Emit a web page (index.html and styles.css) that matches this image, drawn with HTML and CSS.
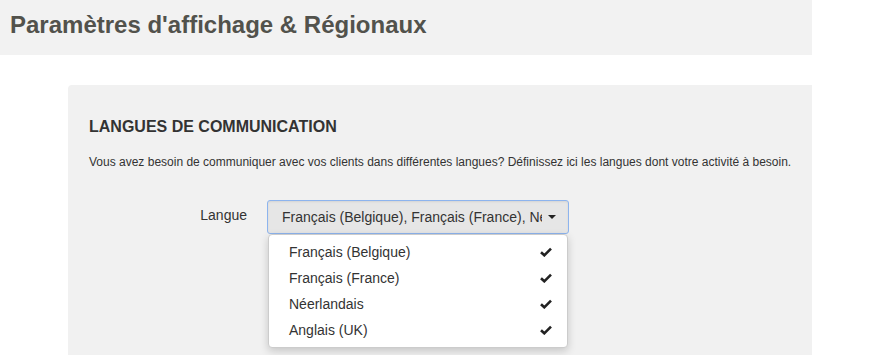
FILE: index.html
```html
<!DOCTYPE html>
<html lang="fr">
<head>
    <meta charset="UTF-8">
    <meta name="viewport" content="width=device-width, initial-scale=1.0">
    <title>Paramètres d'affichage & Régionaux</title>
    <link rel="stylesheet" href="styles.css">
</head>
<body>
    <header class="page-head">
        <h1>Paramètres d'affichage &amp; Régionaux</h1>
    </header>

    <div class="content">
        <section class="card">
            <h2>LANGUES DE COMMUNICATION</h2>
            <p class="intro">Vous avez besoin de communiquer avec vos clients dans différentes langues? Définissez ici les langues dont votre activité à besoin.</p>

            <!-- Language multiselect -->
            <div class="form-row">
                <label class="form-label" for="lang-select">Langue</label>
                <div class="multiselect">
                    <button id="lang-select" class="multiselect-toggle" type="button">
                        <span class="multiselect-text">Français (Belgique), Français (France), Néerlandais, Anglais (UK)</span>
                        <span class="caret"></span>
                    </button>
                    <ul class="multiselect-menu">
                        <li><span>Français (Belgique)</span><svg class="check" viewBox="0 0 12 10"><path d="M1 5.2 L4.3 8.3 L11 1.6" /></svg></li>
                        <li><span>Français (France)</span><svg class="check" viewBox="0 0 12 10"><path d="M1 5.2 L4.3 8.3 L11 1.6" /></svg></li>
                        <li><span>Néerlandais</span><svg class="check" viewBox="0 0 12 10"><path d="M1 5.2 L4.3 8.3 L11 1.6" /></svg></li>
                        <li><span>Anglais (UK)</span><svg class="check" viewBox="0 0 12 10"><path d="M1 5.2 L4.3 8.3 L11 1.6" /></svg></li>
                    </ul>
                </div>
            </div>
        </section>
    </div>
</body>
</html>
```

FILE: styles.css
```css
/* Global styles */
body {
    font-family: "Liberation Sans", Arial, sans-serif;
    background-color: #fff;
    color: #333;
    margin: 0;
    padding: 0;
}

/* Page header */
.page-head {
    width: 812px;
    height: 55px;
    background-color: #f2f2f2;
    box-sizing: border-box;
    padding: 9px 0 0 10px;
}

.page-head h1 {
    margin: 0;
    font-size: 24px;
    font-weight: bold;
    color: #52524c;
    line-height: 32px;
}

/* Content area */
.content {
    width: 812px;
    padding: 30px 0 0 68px;
    box-sizing: border-box;
}

.card {
    background-color: #f1f1f1;
    border-radius: 4px 0 0 0;
    padding: 32px 20px 40px 21px;
    height: 270px;
    box-sizing: border-box;
}

.card h2 {
    margin: 0;
    font-size: 16px;
    font-weight: bold;
    color: #333;
    line-height: 20px;
}

.intro {
    margin: 17px 0 0;
    font-size: 12px;
    line-height: 16px;
    color: #333;
}

/* Form row */
.form-row {
    display: flex;
    align-items: flex-start;
    margin-top: 30px;
}

.form-label {
    width: 178px;
    text-align: right;
    padding-right: 20px;
    font-size: 14px;
    line-height: 31px;
    box-sizing: border-box;
}

/* Multiselect */
.multiselect {
    position: relative;
    width: 302px;
}

.multiselect-toggle {
    display: flex;
    align-items: center;
    width: 100%;
    height: 34px;
    padding: 0 12px 0 14px;
    background-color: #e6e6e6;
    border: 1px solid #8db4ee;
    border-radius: 3px;
    font-family: inherit;
    font-size: 14px;
    color: #333;
    box-sizing: border-box;
    box-shadow: inset 0 1px 2px rgba(0, 0, 0, 0.08);
}

.multiselect-text {
    flex: 1;
    overflow: hidden;
    white-space: nowrap;
    text-align: left;
}

.caret {
    width: 0;
    height: 0;
    margin-left: 6px;
    border-top: 4px solid #222;
    border-left: 4px solid transparent;
    border-right: 4px solid transparent;
}

.multiselect-menu {
    position: absolute;
    top: 34px;
    left: 1px;
    width: 300px;
    margin: 0;
    padding: 4px 0;
    list-style: none;
    background-color: #fff;
    border: 1px solid #ccc;
    border-radius: 4px;
    box-shadow: 0 3px 8px rgba(0, 0, 0, 0.18);
    box-sizing: border-box;
}

.multiselect-menu li {
    display: flex;
    justify-content: space-between;
    align-items: center;
    height: 26px;
    padding: 0 15px 0 20px;
    font-size: 14px;
    color: #333;
}

.check {
    width: 12px;
    height: 10px;
    fill: none;
    stroke: #222;
    stroke-width: 2.6;
}
```
